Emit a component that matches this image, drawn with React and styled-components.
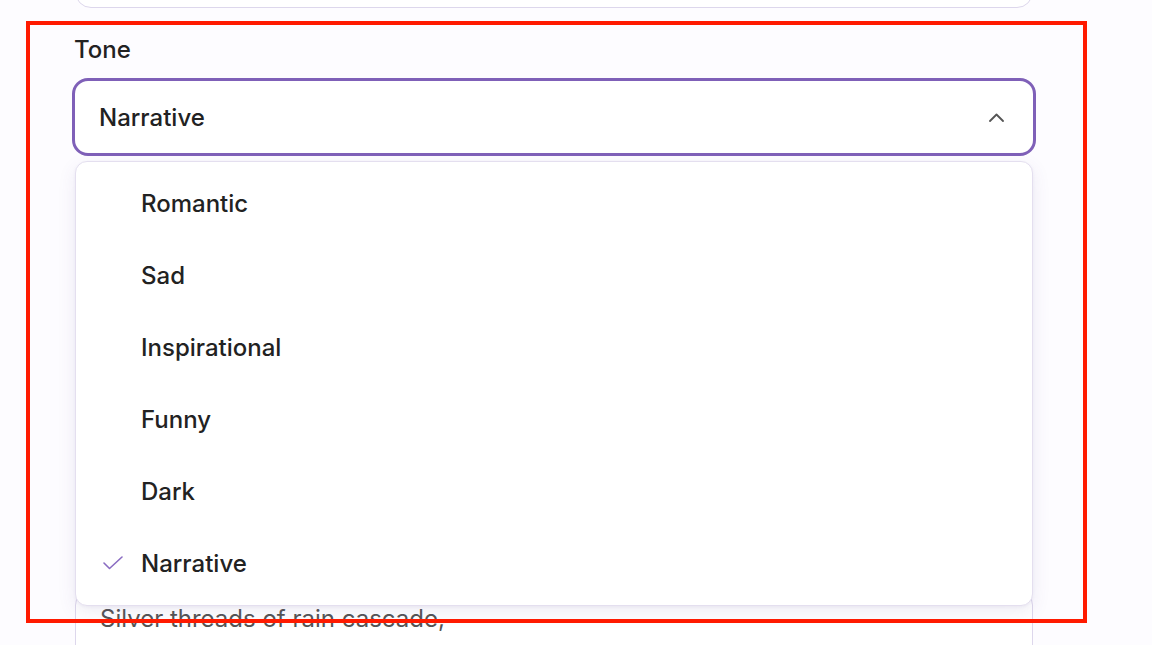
import React from "react";
import styled, { createGlobalStyle } from "styled-components";

const Global = createGlobalStyle`
  html, body { margin: 0; padding: 0; background: #fdfcff; }
  body { font-family: Inter, "Noto Sans", sans-serif; color: #222; overflow: hidden; }
`;

const Page = styled.div`
  position: relative;
  width: 1152px;
  height: 645px;
  overflow: hidden;
  padding: 0 119px 0 75px;
  box-sizing: border-box;
`;

const TopCard = styled.div`
  margin-top: -40px;
  height: 48px;
  box-sizing: border-box;
  border: 1px solid #ddd7ec;
  border-radius: 16px;
  background: #fff;
`;

const Form = styled.div`
  margin-top: 28px;
  display: flex;
  flex-direction: column;
`;

const Field = styled.div`
  position: relative;
  display: flex;
  flex-direction: column;
  gap: 14px;
  z-index: ${(p) => (p.$open ? 5 : 1)};
`;

const Label = styled.label`
  font-size: 24px;
  line-height: 28px;
  font-weight: 500;
  color: #222;
  margin-left: -1px;
`;

const Trigger = styled.div`
  margin: ${(p) => (p.$open ? "0 -3px" : "0")};
  height: ${(p) => (p.$open ? "78px" : "72px")};
  box-sizing: border-box;
  border: ${(p) => (p.$open ? "3px solid #7f60b8" : "1px solid #ddd7ec")};
  border-radius: 16px;
  background: #fff;
  display: flex;
  align-items: center;
  justify-content: space-between;
  padding: 0 29px 0 24px;
  font-size: 24px;
  font-weight: 500;
  color: #222;
`;

const Menu = styled.div`
  position: absolute;
  top: calc(100% + 5px);
  left: 0;
  right: 0;
  box-sizing: border-box;
  background: #fff;
  border: 1px solid #e4dfef;
  border-radius: 12px;
  padding: 5px 0 6px;
  box-shadow: 0 6px 18px rgba(90, 70, 150, 0.1), 0 1px 3px rgba(90, 70, 150, 0.06);
`;

const Item = styled.div`
  height: 72px;
  display: flex;
  align-items: center;
  padding-left: 27px;
  font-size: 24px;
  font-weight: 500;
  color: #222;
`;

const CheckSlot = styled.span`
  width: 38px;
  height: 24px;
  display: flex;
  align-items: center;
`;

const PoemCard = styled.div`
  margin-top: 433px;
  box-sizing: border-box;
  border: 1px solid #ddd7ec;
  border-radius: 16px;
  background: #fff;
  padding: 8px 24px;
  min-height: 200px;
`;

const PoemLine = styled.p`
  margin: 0;
  font-size: 24px;
  line-height: 42px;
  color: #555;
`;

const Annotation = styled.div`
  position: absolute;
  left: 26px;
  top: 21px;
  width: 1061px;
  height: 602px;
  box-sizing: border-box;
  border: 4px solid #ff1a00;
  pointer-events: none;
  z-index: 10;
`;

const Chevron = () => (
  <svg width="15" height="9" viewBox="0 0 15 9" fill="none">
    <polyline points="1,8 7.5,1.5 14,8" stroke="#555" strokeWidth="1.8" strokeLinecap="round" strokeLinejoin="round" />
  </svg>
);

const Check = () => (
  <svg width="20" height="14" viewBox="0 0 20 14" fill="none">
    <polyline points="1,7 6.5,12.5 19,1" stroke="#8a6cc2" strokeWidth="1.6" strokeLinecap="round" strokeLinejoin="round" />
  </svg>
);

const tones = ["Romantic", "Sad", "Inspirational", "Funny", "Dark", "Narrative"];

export default function App() {
  const selected = "Narrative";
  return (
    <>
      <Global />
      <Page>
        <TopCard />
        <Form>
          <Field $open>
            <Label>Tone</Label>
            <Trigger $open>
              <span>{selected}</span>
              <Chevron />
            </Trigger>
            <Menu>
              {tones.map((t) => (
                <Item key={t}>
                  <CheckSlot>{t === selected && <Check />}</CheckSlot>
                  {t}
                </Item>
              ))}
            </Menu>
          </Field>
          <PoemCard>
            <PoemLine>Silver threads of rain cascade,</PoemLine>
          </PoemCard>
        </Form>
        <Annotation />
      </Page>
    </>
  );
}
